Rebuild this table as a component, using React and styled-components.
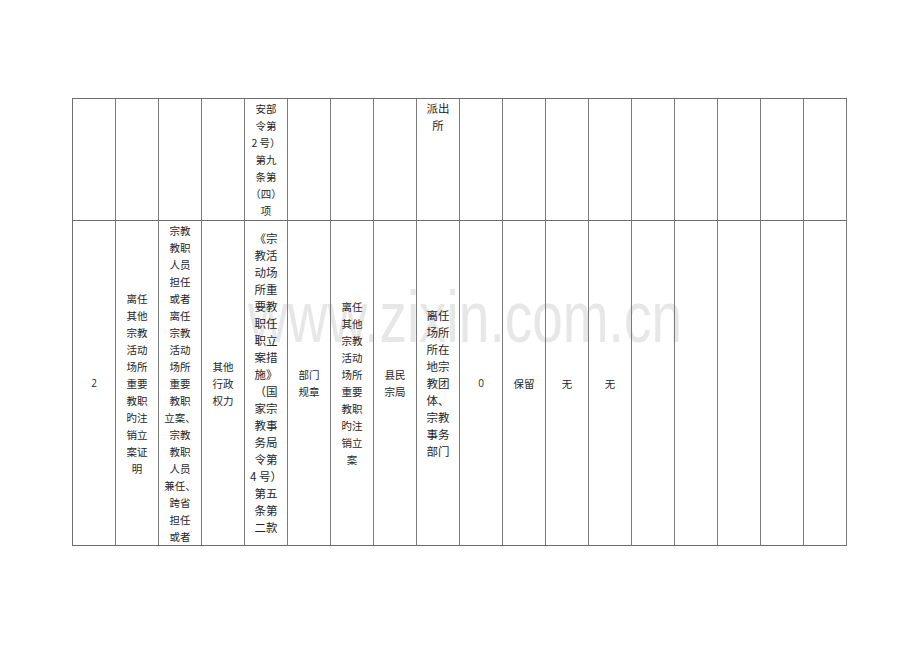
import React from 'react';
import styled, { createGlobalStyle } from 'styled-components';

const GlobalStyle = createGlobalStyle`
  html, body {
    margin: 0;
    padding: 0;
    background: #ffffff;
  }
  * {
    box-sizing: border-box;
  }
`;

const Page = styled.div`
  width: 920px;
  height: 651px;
  padding: 98px 0 0 72px;
  background: #ffffff;
  overflow: hidden;
`;

const Sheet = styled.div`
  position: relative;
  width: 775px;
`;

// light grey site watermark that sits under the table
const Watermark = styled.div`
  position: absolute;
  left: 176px;
  top: 183px;
  z-index: 0;
  font-family: "Liberation Sans", Arial, sans-serif;
  font-size: 55px;
  line-height: 1;
  color: #e7e7e7;
  white-space: nowrap;
  transform: scaleY(1.32);
  transform-origin: left top;
  pointer-events: none;
`;

const Table = styled.div`
  position: relative;
  z-index: 1;
  display: grid;
  grid-template-columns: repeat(18, 43px);
  grid-template-rows: 122px 325px;
  border-left: 1px solid #6e6e6e;
  border-top: 1px solid #6e6e6e;
`;

const Cell = styled.div`
  display: flex;
  flex-direction: column;
  align-items: center;
  justify-content: ${(p) => (p.$top ? 'flex-start' : 'center')};
  padding-top: ${(p) => (p.$top ? '1px' : '0')};
  border-right: 1px solid #7a7a7a;
  border-bottom: 1px solid #6e6e6e;
  overflow: hidden;
  font-family: "Noto Sans CJK SC", "Noto Sans", sans-serif;
  font-size: ${(p) => (p.$big ? '11.5px' : '10.5px')};
  line-height: 17px;
  color: #262626;
  text-align: center;
`;

const Line = styled.span`
  display: block;
  height: 17px;
  white-space: nowrap;
`;

const Num = styled.span`
  font-family: "Open Sans", "Liberation Sans", sans-serif;
  font-size: 10px;
  color: #262626;
`;

const empty = {};

const rows = [
  [
    empty, empty, empty, empty,
    { top: true, lines: ['安部', '令第', '2 号）', '第九', '条第', '（四）', '项'] },
    empty, empty, empty,
    { top: true, big: true, lines: ['派出', '所'] },
    empty, empty, empty, empty, empty, empty, empty, empty, empty,
  ],
  [
    { num: '2' },
    { lines: ['离任', '其他', '宗教', '活动', '场所', '重要', '教职', '旳注', '销立', '案证', '明'] },
    {
      top: true,
      lines: [
        '宗教', '教职', '人员', '担任', '或者', '离任', '宗教', '活动', '场所', '重要',
        '教职', '立案、', '宗教', '教职', '人员', '兼任、', '跨省', '担任', '或者',
      ],
    },
    { lines: ['其他', '行政', '权力'] },
    {
      big: true,
      lines: [
        '《宗', '教活', '动场', '所重', '要教', '职任', '职立', '案措', '施》',
        '（国', '家宗', '教事', '务局', '令第', '4 号）', '第五', '条第', '二款',
      ],
    },
    { lines: ['部门', '规章'] },
    { lines: ['离任', '其他', '宗教', '活动', '场所', '重要', '教职', '旳注', '销立', '案'] },
    { lines: ['县民', '宗局'] },
    { big: true, lines: ['离任', '场所', '所在', '地宗', '教团', '体、', '宗教', '事务', '部门'] },
    { num: '0' },
    { lines: ['保留'] },
    { lines: ['无'] },
    { lines: ['无'] },
    empty, empty, empty, empty, empty,
  ],
];

const App = () => (
  <Page>
    <GlobalStyle />
    <Sheet>
      <Watermark>www.zixin.com.cn</Watermark>
      <Table>
        {rows.map((row, r) =>
          row.map((cell, c) => (
            <Cell key={`${r}-${c}`} $top={cell.top} $big={cell.big}>
              {cell.num && <Num>{cell.num}</Num>}
              {cell.lines && cell.lines.map((text, i) => <Line key={i}>{text}</Line>)}
            </Cell>
          ))
        )}
      </Table>
    </Sheet>
  </Page>
);

export default App;
